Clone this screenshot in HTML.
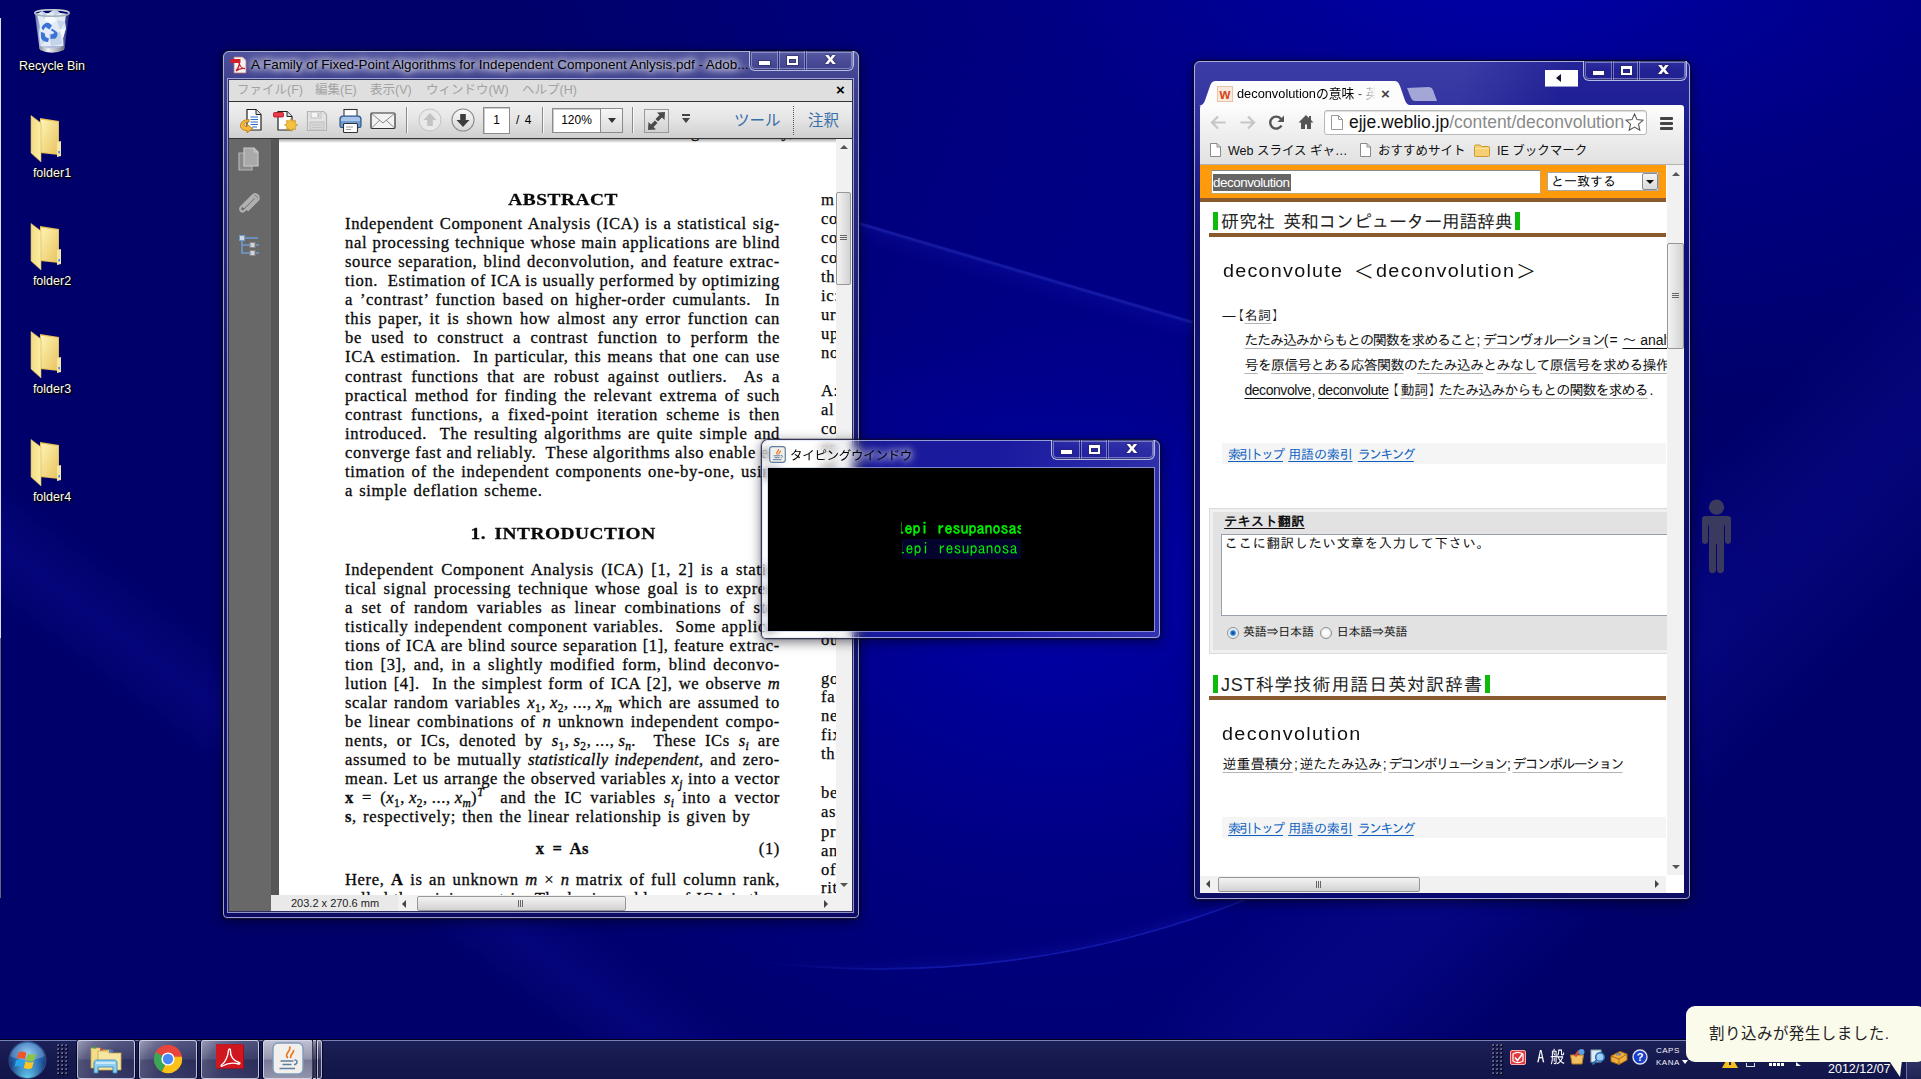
<!DOCTYPE html>
<html lang="ja">
<head>
<meta charset="utf-8">
<title>Desktop</title>
<style>
*{box-sizing:border-box;margin:0;padding:0}
html,body{width:1921px;height:1079px;overflow:hidden}
body{position:relative;background:#000070;font-family:"Liberation Sans","Noto Sans CJK JP",sans-serif;font-size:12px;color:#000}
.abs{position:absolute}
#desk{position:absolute;left:0;top:0;width:1921px;height:1079px;overflow:hidden;
background:
linear-gradient(135deg,rgba(0,0,0,0) 72%,rgba(25,25,180,.2) 76.500%,rgba(25,25,180,.22) 78.500%,rgba(0,0,0,0) 84%),
linear-gradient(37deg,rgba(0,0,0,0) 18.500%,rgba(20,20,170,.22) 20.600%,rgba(20,20,170,.25) 21.200%,rgba(0,0,0,0) 24%),
radial-gradient(ellipse 700px 560px at 1060px 590px,rgba(0,0,185,.8),rgba(0,0,160,.45) 50%,rgba(0,0,140,0) 100%),
radial-gradient(ellipse 1000px 460px at 1500px -40px,rgba(0,0,190,.75),rgba(0,0,165,.4) 50%,rgba(0,0,140,0) 100%),
#00006a}
/* desktop icons */
.dicon{position:absolute;width:104px;text-align:center;color:#fff;font-size:12.5px;text-shadow:1px 1px 2px #000,0 0 3px #000,0 1px 1px #000}
/* aero windows */
.win{position:absolute;border-radius:7px 7px 5px 5px;border:1px solid rgba(0,0,20,.75);box-shadow:0 0 0 1px rgba(0,0,30,.2),0 3px 12px rgba(0,0,20,.55)}
.win .glass{position:absolute;left:0;top:0;right:0;bottom:0;border-radius:6px 6px 4px 4px;border:1px solid rgba(200,205,245,.75)}
.wtitle{position:absolute;white-space:nowrap;font-size:13px;color:#000;text-shadow:0 0 6px #fff,0 0 9px #fff,0 0 12px rgba(255,255,255,.9)}
.cbtns{position:absolute;height:20px;border:1px solid rgba(205,210,245,.85);border-top:none;border-radius:0 0 6px 6px;display:flex;overflow:hidden;background:linear-gradient(rgba(255,255,255,.05),rgba(255,255,255,0) 50%,rgba(0,0,20,.05));box-shadow:inset 0 0 0 1px rgba(12,12,70,.6),inset 0 0 0 2px rgba(185,190,240,.5)}
.cbtns div{height:100%;border-right:1px solid rgba(12,12,70,.55);box-shadow:inset -1px 0 0 rgba(190,195,240,.5),1px 0 0 rgba(190,195,240,.5);position:relative}
.cbtns div:last-child{border-right:none}

/* PDF window */
#pdfwin{left:222px;top:50px;width:638px;height:869px;background:linear-gradient(#50529e 0,#40428f 28px,#2a2c84 110px,#181a72 320px,#0c0c64 100%)}
#pdfc{position:absolute;left:6px;top:29px;width:623px;height:831px;background:#666;overflow:hidden;box-shadow:0 0 0 1px rgba(8,8,50,.75),0 0 0 2px rgba(200,205,245,.7)}
#pmenu{position:absolute;left:0;top:0;width:623px;height:22px;background:#dfdfdf;border-bottom:1px solid #333;font-size:12.5px;color:#a2a2a2}
#pmenu span{position:absolute;top:2px;white-space:nowrap;line-height:16px}
#ptool{position:absolute;left:0;top:22px;width:623px;height:37px;background:linear-gradient(#efefef,#e6e6e6 45%,#cfcfcf);border-bottom:1px solid #333}
#ppane{position:absolute;left:0;top:59px;width:42px;height:772px;background:#686868}
#pgap{position:absolute;left:42px;top:59px;width:8px;height:756px;background:#565656}
#ppage{position:absolute;left:50px;top:59px;width:557px;height:756px;background:#fff;overflow:hidden;font-family:"Liberation Serif",serif;font-size:16.6px;color:#0a0a0a;line-height:19px;letter-spacing:.62px}
#ppage:before{content:"";position:absolute;left:0;top:0;width:100%;height:4px;background:linear-gradient(rgba(0,0,0,.35),rgba(0,0,0,0))}
.pl{position:absolute;margin-top:1px;left:66px;width:435px;height:19px;text-align:justify;text-align-last:justify;-webkit-text-stroke:.3px #0a0a0a;white-space:nowrap}
.ph{left:66px;width:435px;text-align:center;font-weight:bold;font-size:17px;letter-spacing:.45px;white-space:nowrap;height:19px;padding-left:1px;transform:scaleX(1.14);-webkit-text-stroke:.3px #0a0a0a}
.pl.l{text-align-last:left;word-spacing:1.5px}
.pr{position:absolute;margin-top:1px;left:542px;width:40px;height:19px;white-space:nowrap;-webkit-text-stroke:.25px #0a0a0a}
.pl sub,.pl sup{font-size:11.500px;line-height:0}
.pl i{-webkit-text-stroke:.35px #0a0a0a}
.pl i{letter-spacing:.3px}
#pvs{position:absolute;left:607px;top:59px;width:16px;height:756px;background:#f1f1f1}
#phs{position:absolute;left:42px;top:815px;width:581px;height:16px;background:#f1f1f1}
.thumbv{position:absolute;border:1px solid #979797;border-radius:2px;background:linear-gradient(90deg,#f3f3f3,#e3e3e3 50%,#d2d2d2)}
.thumbh{position:absolute;border:1px solid #979797;border-radius:2px;background:linear-gradient(#f3f3f3,#e3e3e3 50%,#d2d2d2)}
.tsep{position:absolute;top:5px;width:1px;height:26px;background:#8a8a8a;box-shadow:1px 0 0 #f8f8f8}
.tbox{position:absolute;background:#fff;border:1px solid #8c8c8c;box-shadow:inset 1px 1px 0 #ccc;font-size:12px;text-align:center}

.cbtns i{position:absolute;display:block;font-style:normal}
.cbtns .mn{left:9px;top:10px;width:11px;height:4px;background:#fff;box-shadow:0 0 0 1px rgba(40,40,90,.55)}
.cbtns .mx{left:8px;top:5px;width:11px;height:9px;border:2px solid #fff;border-top-width:3px;box-shadow:0 0 0 1px rgba(40,40,90,.55),inset 0 0 0 1px rgba(40,40,90,.55)}
.cbtns .cl{left:1px;right:-1px;top:-2px;text-align:center;color:#fff;font-weight:bold;font-size:16px;line-height:19px;font-family:"DejaVu Sans","Liberation Sans",sans-serif;text-shadow:0 0 1px #224,0 0 2px #224;transform:scaleX(1.1)}

/* Chrome window */
#chromewin{left:1193px;top:60px;width:498px;height:840px;background:linear-gradient(105deg,rgba(0,0,130,0) 0,rgba(0,0,130,0) 38%,rgba(0,0,130,.4) 52%,rgba(0,0,130,.4) 70%,rgba(0,0,130,0) 84%),linear-gradient(#3c3ca6 0,#3636a2 40px,#2a2a96 80px,#1a1a82 130px,#111170 220px,#0e0e66 100%)}
#ctab{position:absolute;left:5px;top:20px;width:214px;height:25px}
#cbar{position:absolute;z-index:2;left:6px;top:44px;width:484px;height:60px;background:linear-gradient(#fdfdfd,#eee 50%,#e1e1e1);border-radius:3px 3px 0 0;border-bottom:1px solid #b3b3b3}
#cweb{position:absolute;left:6px;top:103px;width:484px;height:729px;background:#fff;overflow:hidden;font-family:"Liberation Sans","IPAGothic","Noto Sans CJK JP",sans-serif}
.bm{position:absolute;top:80px;font-size:12.5px;white-space:nowrap;color:#111}
.wl{position:absolute;white-space:nowrap;font-size:14px;color:#111;text-decoration:underline;text-decoration-color:#aaa;text-underline-offset:3px;text-decoration-thickness:1px}
.wl b{font-weight:normal;text-decoration:underline;text-decoration-color:#111}
.wl s{text-decoration:none;display:inline-block}
.idx{position:absolute;left:22px;width:444px;height:21px;background:#f5f5f5;font-size:13px;color:#06c;white-space:nowrap;line-height:21px;padding-left:5px;word-spacing:1px}
.idx span{text-decoration:underline}
.gh{position:absolute;left:12px;height:18px;border-left:5px solid #0dbb0d;border-right:5px solid #0dbb0d;padding:0 2px;font-size:18px;line-height:18px;white-space:nowrap;color:#222}
.br{position:absolute;left:9px;width:457px;height:4px;background:#8a5a2e}
.pg{display:inline-block;vertical-align:-2px;margin-right:7px}

/* typing window */
#typewin{left:761px;top:439px;width:400px;height:200px;background:linear-gradient(100deg,rgba(255,255,255,.1) 0,rgba(255,255,255,.1) 55%,rgba(255,255,255,.2) 100%);backdrop-filter:blur(5px);-webkit-backdrop-filter:blur(5px);border-color:rgba(5,5,40,.8)}
#typec{position:absolute;left:6px;top:28px;width:386px;height:163px;background:#000;box-shadow:0 0 0 1px rgba(190,200,240,.6);font-family:"IPAGothic","Liberation Mono",monospace;font-size:16px;color:#00f000;white-space:pre}
/* taskbar */
#taskbar{position:absolute;left:0;top:1040px;width:1921px;height:39px;background:linear-gradient(#1c2058 0,#161a4e 40%,#12154a 100%);border-top:1px solid #7a80b8;box-shadow:0 -1px 0 #02021a}
.tb{position:absolute;top:-1px;height:39px;border:1px solid rgba(215,218,240,.8);border-radius:3px;background:linear-gradient(rgba(255,255,255,.1),rgba(255,255,255,.04) 48%,rgba(0,0,30,.12) 52%,rgba(255,255,255,.03)),linear-gradient(125deg,rgba(255,255,255,.5) 0,rgba(255,255,255,.28) 22%,rgba(255,255,255,.16) 50%,rgba(255,255,255,.1) 100%);box-shadow:0 0 0 1px rgba(0,0,20,.7)}
.grip{position:absolute;width:11px;background-image:radial-gradient(circle at 1.2px 1.2px,#6a6c8c 0,#6a6c8c .7px,transparent 1.2px),radial-gradient(circle at 2.2px 2.2px,#04041e 0,#04041e .9px,transparent 1.400px);background-size:4px 4px}
#balloon{position:absolute;left:1686px;top:1006px;width:240px;height:56px;background:#fbfbec;border-radius:9px;font-size:15px;color:#222}

.ln{position:absolute;left:0;height:18px;line-height:18px;white-space:nowrap;color:#111}
.ln span{position:absolute;top:0;white-space:nowrap}
.ln s{text-decoration:none;display:inline-block}
.f14{font-size:14px;height:16px;line-height:16px}
.f13{font-size:13px;height:16px;line-height:16px}
.f12{font-size:12px;height:16px;line-height:16px}
.h18{font-size:18px;height:20px;line-height:20px;color:#222}
.h2{font-size:18px;height:22px;line-height:22px}
.sx{transform:scaleX(1.1);transform-origin:0 50%}
.jp{font-family:"IPAGothic","Noto Sans CJK JP",sans-serif}
.ug{text-decoration:underline;text-decoration-color:#b4b4b4;text-underline-offset:3px;text-decoration-thickness:1px}
.ud{text-decoration:underline;text-decoration-color:#111;text-underline-offset:3px;text-decoration-thickness:1px}
.ub{text-decoration:underline;text-underline-offset:2px;text-decoration-thickness:1px}
.lk span{color:#0a5fc0;text-decoration:underline;text-underline-offset:2px;text-decoration-thickness:1px}
.idxbg{position:absolute;left:22px;width:444px;height:21px;background:#f5f5f5}
.gb{position:absolute;width:5px;height:18px;background:#0dbb0d}
</style>
</head>
<body>
<div id="desk">

<div class="abs" style="left:700px;top:174px;width:560px;height:22px;transform-origin:0 0;transform:rotate(16.500deg);background:linear-gradient(rgba(90,100,255,0) 0,rgba(80,100,255,.3) 2px,rgba(40,50,220,.1) 5px,rgba(20,20,180,0) 100%)"></div>
<div class="abs" style="left:-120px;top:-1030px;width:2000px;height:2000px;border-radius:50%;border:2px solid rgba(50,70,255,.35);box-shadow:inset 0 0 16px rgba(40,50,235,.25);-webkit-mask-image:linear-gradient(90deg,transparent 44%,#000 53%,#000 66%,transparent 80%);mask-image:linear-gradient(90deg,transparent 44%,#000 53%,#000 66%,transparent 80%)"></div>
<!-- DESKTOP ICONS -->
<div id="icons">
<div class="abs" style="left:0;top:18px;width:1px;height:620px;background:#dde"></div><div class="abs" style="left:0;top:638px;width:1px;height:260px;background:#667"></div>
<svg width="38" height="46" viewBox="0 0 38 46" style="position:absolute;left:33px;top:8px;overflow:visible">
<defs><linearGradient id="rb1" x1="0" y1="0" x2="1" y2="0"><stop offset="0" stop-color="#7f97bd" stop-opacity=".75"/><stop offset=".18" stop-color="#d6e2f2" stop-opacity=".9"/><stop offset=".75" stop-color="#c5d4ea" stop-opacity=".85"/><stop offset=".9" stop-color="#5f78a8" stop-opacity=".55"/><stop offset="1" stop-color="#3f5890" stop-opacity=".5"/></linearGradient>
<linearGradient id="rb2" x1="0" y1="0" x2="1" y2="0"><stop offset="0" stop-color="#8a8f98"/><stop offset=".35" stop-color="#f2f3f5"/><stop offset=".7" stop-color="#aeb3bb"/><stop offset="1" stop-color="#6d727c"/></linearGradient></defs>
<path d="M1.800 5 L36.200 5 L31.500 41 Q19 46 6.500 41 Z" fill="url(#rb1)"/>
<path d="M4 6 L9 3 L14 6 L22 1 L27 5 L33 6 L32 14 L33 20 L30 30 L30.500 38 L8 38 L6 26 L7 18 Z" fill="#e6eef8" opacity=".95"/>
<path d="M9 3 L14 6 L11 12 Z M22 1 L27 5 L20 9 Z M24 12 L32 14 L27 22 Z M16 26 L27 24 L29 36 L18 38 Z M6.500 22 L13 30 L9 37 Z" fill="#c3d3e8"/>
<path d="M14 6 L20 9 L24 12 L18 16 L11 12 Z M27 22 L33 20 L30 30 Z" fill="#f6f9fd"/>
<path d="M8.500 19.500 q3-5.500 7.500-4.500 l3 2.500 -2.500 4 -4-2.500 -2.500 3.500z M19 20.500 l5 3.500 q1.500 3.500-1.500 6.500 l-5 .5 0-4.500 3-.5 .5-2 -3-1.500z M8 24 l3.500 1 1 4 3.500 1.500 -1 3.500 q-5 0-7-4z" fill="#3a72d6"/>
<path d="M6.500 38 Q19 43 31.500 38 L31 42 Q19 47.500 7 42 Z" fill="url(#rb2)"/>
<ellipse cx="19" cy="5" rx="17.300" ry="3.300" fill="none" stroke="#a9b0ba" stroke-width="1.500"/>
<path d="M2 4.500 a17.300 3.300 0 0 1 34 0" fill="none" stroke="#e2e6ea" stroke-width=".8"/>
</svg>
<div class="dicon" style="left:0;top:59px">Recycle Bin</div>
<svg width="34" height="48" viewBox="0 0 34 48" style="position:absolute;left:30px;top:115px;overflow:visible">
<defs><linearGradient id="fg0" x1="0" y1="0" x2="1" y2="1"><stop offset="0" stop-color="#fdf3b4"/><stop offset="1" stop-color="#e9c55f"/></linearGradient>
<linearGradient id="fh0" x1="0" y1="0" x2="1" y2="0"><stop offset="0" stop-color="#f3da82"/><stop offset="1" stop-color="#fbeea6"/></linearGradient></defs>
<path d="M10 3 L29 6 L29 40 L10 38 Z" fill="#e4bd55"/>
<path d="M11 4.5 L28 7 L28 39 L11 37 Z" fill="url(#fg0)"/>
<path d="M27 27 L31 26 L31 41 L27 42 Z" fill="#f4e6a6"/>
<rect x="28.3" y="36" width="1.6" height="2.4" fill="#3f8fe0"/>
<path d="M1 0.5 L11 8 L11 47 L1 38 Z" fill="url(#fh0)" stroke="#d9b650" stroke-width=".6"/>
</svg>
<div class="dicon" style="left:0;top:166px">folder1</div>
<svg width="34" height="48" viewBox="0 0 34 48" style="position:absolute;left:30px;top:223px;overflow:visible">
<defs><linearGradient id="fg1" x1="0" y1="0" x2="1" y2="1"><stop offset="0" stop-color="#fdf3b4"/><stop offset="1" stop-color="#e9c55f"/></linearGradient>
<linearGradient id="fh1" x1="0" y1="0" x2="1" y2="0"><stop offset="0" stop-color="#f3da82"/><stop offset="1" stop-color="#fbeea6"/></linearGradient></defs>
<path d="M10 3 L29 6 L29 40 L10 38 Z" fill="#e4bd55"/>
<path d="M11 4.5 L28 7 L28 39 L11 37 Z" fill="url(#fg1)"/>
<path d="M27 27 L31 26 L31 41 L27 42 Z" fill="#f4e6a6"/>
<rect x="28.3" y="36" width="1.6" height="2.4" fill="#3f8fe0"/>
<path d="M1 0.5 L11 8 L11 47 L1 38 Z" fill="url(#fh1)" stroke="#d9b650" stroke-width=".6"/>
</svg>
<div class="dicon" style="left:0;top:274px">folder2</div>
<svg width="34" height="48" viewBox="0 0 34 48" style="position:absolute;left:30px;top:331px;overflow:visible">
<defs><linearGradient id="fg2" x1="0" y1="0" x2="1" y2="1"><stop offset="0" stop-color="#fdf3b4"/><stop offset="1" stop-color="#e9c55f"/></linearGradient>
<linearGradient id="fh2" x1="0" y1="0" x2="1" y2="0"><stop offset="0" stop-color="#f3da82"/><stop offset="1" stop-color="#fbeea6"/></linearGradient></defs>
<path d="M10 3 L29 6 L29 40 L10 38 Z" fill="#e4bd55"/>
<path d="M11 4.5 L28 7 L28 39 L11 37 Z" fill="url(#fg2)"/>
<path d="M27 27 L31 26 L31 41 L27 42 Z" fill="#f4e6a6"/>
<rect x="28.3" y="36" width="1.6" height="2.4" fill="#3f8fe0"/>
<path d="M1 0.5 L11 8 L11 47 L1 38 Z" fill="url(#fh2)" stroke="#d9b650" stroke-width=".6"/>
</svg>
<div class="dicon" style="left:0;top:382px">folder3</div>
<svg width="34" height="48" viewBox="0 0 34 48" style="position:absolute;left:30px;top:439px;overflow:visible">
<defs><linearGradient id="fg3" x1="0" y1="0" x2="1" y2="1"><stop offset="0" stop-color="#fdf3b4"/><stop offset="1" stop-color="#e9c55f"/></linearGradient>
<linearGradient id="fh3" x1="0" y1="0" x2="1" y2="0"><stop offset="0" stop-color="#f3da82"/><stop offset="1" stop-color="#fbeea6"/></linearGradient></defs>
<path d="M10 3 L29 6 L29 40 L10 38 Z" fill="#e4bd55"/>
<path d="M11 4.5 L28 7 L28 39 L11 37 Z" fill="url(#fg3)"/>
<path d="M27 27 L31 26 L31 41 L27 42 Z" fill="#f4e6a6"/>
<rect x="28.3" y="36" width="1.6" height="2.4" fill="#3f8fe0"/>
<path d="M1 0.5 L11 8 L11 47 L1 38 Z" fill="url(#fh3)" stroke="#d9b650" stroke-width=".6"/>
</svg>
<div class="dicon" style="left:0;top:490px">folder4</div>
</div>

<!-- PDF WINDOW -->
<div id="pdfwin" class="win">
<div class="glass"></div>
<svg class="abs" style="left:7px;top:5px" width="17" height="18" viewBox="0 0 17 18"><path d="M4 1h8.500l3.500 3.500v12.500h-12z" fill="#f4f4f4" stroke="#b77" stroke-width=".8"/><path d="M12.500 1v3.500h3.500" fill="#ddd"/><rect x="0.500" y="3" width="10" height="4" fill="#d2202a"/><path d="M6 15c2-2.500 3.500-6 3.200-8.500M6 15c2.500-2 6-3 9-2.500M9.200 7c.5 3 3 5.500 5.800 5.500" fill="none" stroke="#c81e28" stroke-width="1.300"/></svg>
<div class="wtitle" style="left:28px;top:6px;font-size:13.45px" id="pdftitle">A Family of Fixed-Point Algorithms for Independent Component Anlysis.pdf - Adob...</div>
<div class="cbtns" style="left:526px;top:0;width:105px"><div style="width:29px"><i class="mn"></i></div><div style="width:27px"><i class="mx"></i></div><div style="width:47px"><i class="cl">x</i></div></div>
<div id="pdfc">
 <div id="pmenu"><span style="left:8px">ファイル(F)</span><span style="left:86px">編集(E)</span><span style="left:141px">表示(V)</span><span style="left:197px">ウィンドウ(W)</span><span style="left:293px">ヘルプ(H)</span><span style="left:607px;top:2px;color:#000;font-size:15px;font-weight:bold">×</span></div>
 <div id="ptool">
<!-- export -->
<svg class="abs" style="left:10px;top:6px" width="26" height="25" viewBox="0 0 26 25"><path d="M8 1.500h9l5 5v15.500h-14z" fill="#fff" stroke="#222" stroke-width="1.200"/><path d="M17 1.500v5h5" fill="#ddd" stroke="#222" stroke-width="1"/><path d="M11.500 9h7.500M11.500 11.500h7.500M11.500 14h7.500M11.500 16.500h7.500M13 19h5" stroke="#2a6fd0" stroke-width="1.100"/><path d="M10 11.500c-5 0-8.500 2.500-8.500 6.200c0 3 2.600 4.800 6.500 4.800v2.300l5.500-4.300-5.500-4.300v2.400c-1.800 0-3-.6-3-2c0-1.600 2-2.600 5-2.600z" fill="#f6b93c" stroke="#b9780c" stroke-width=".9"/></svg>
<!-- create -->
<svg class="abs" style="left:43px;top:6px" width="27" height="26" viewBox="0 0 27 26"><path d="M6 3.500h9l5 5v13.500h-14z" fill="#fff" stroke="#222" stroke-width="1.200"/><path d="M15 3.500v5h5" fill="#ddd" stroke="#222" stroke-width="1"/><rect x="1.500" y="4.500" width="10" height="4.500" rx="1" fill="#ee3a46" stroke="#a0101c" stroke-width=".8"/><path d="M19 14l1.500 2.600 3-.6-.6 3 2.600 1.500-2.600 1.500.6 3-3-.6-1.500 2.600-1.500-2.600-3 .6.600-3-2.600-1.500 2.600-1.500-.6-3 3 .6z" fill="#f6c13c" stroke="#c58c16" stroke-width=".7" transform="translate(0,-3.500)"/></svg>
<!-- save (disabled) -->
<svg class="abs" style="left:77px;top:8px" width="22" height="22" viewBox="0 0 22 22"><path d="M1.500 1.500h16l3 3v16h-19z" fill="#e4e4e4" stroke="#b4b4b4" stroke-width="1.200"/><rect x="5" y="2" width="10" height="6" fill="#f4f4f4" stroke="#bdbdbd"/><rect x="11.500" y="3" width="2" height="4" fill="#bdbdbd"/><rect x="4" y="12" width="14" height="8" fill="#d8d8d8" stroke="#bdbdbd"/><path d="M6 15h10M6 17.500h10" stroke="#c4c4c4"/></svg>
<!-- print -->
<svg class="abs" style="left:109px;top:6px" width="25" height="26" viewBox="0 0 25 26"><rect x="6" y="1.500" width="13" height="9" fill="#fff" stroke="#333" stroke-width="1.100"/><path d="M2 11c0-2 1-3 3-3h15c2 0 3 1 3 3v7c0 1-.5 1.500-1.500 1.500h-18c-1 0-1.500-.5-1.500-1.500z" fill="#6f9bd0" stroke="#2c4f80" stroke-width="1.100"/><path d="M3 11.500c0-1.500 1-2.500 2.500-2.500h14c1.500 0 2.500 1 2.500 2.500v1.500h-19z" fill="#a9c6ea"/><rect x="5.500" y="15.500" width="14" height="9" rx="1" fill="#fff" stroke="#333" stroke-width="1.100"/><path d="M8 19h7M8 21.500h5" stroke="#999"/></svg>
<!-- mail -->
<svg class="abs" style="left:141px;top:10px" width="26" height="18" viewBox="0 0 26 18"><rect x="1" y="1" width="24" height="15.500" rx="1" fill="#f2f2f2" stroke="#333" stroke-width="1.200"/><path d="M1.500 1.500l11.500 9.500 11.500-9.500M1.500 16l8.500-8M24.500 16l-8.500-8" fill="none" stroke="#8a8a8a" stroke-width="1"/></svg>
<div class="tsep" style="left:177px"></div>
<!-- up (disabled) -->
<svg class="abs" style="left:189px;top:6px" width="24" height="24" viewBox="0 0 24 24"><circle cx="12" cy="12" r="11" fill="#e9e9e9" stroke="#c2c2c2" stroke-width="1"/><path d="M12 5l6.500 7h-3.700v6h-5.600v-6h-3.700z" fill="#c3c3c3"/></svg>
<!-- down -->
<svg class="abs" style="left:222px;top:6px" width="24" height="24" viewBox="0 0 24 24"><defs><linearGradient id="dg" x1="0" y1="0" x2="0" y2="1"><stop offset="0" stop-color="#fafafa"/><stop offset="1" stop-color="#d6d6d6"/></linearGradient></defs><circle cx="12" cy="12" r="11" fill="url(#dg)" stroke="#8d8d8d" stroke-width="1.100"/><path d="M12 19l6.500-7h-3.700v-6h-5.600v6h-3.700z" fill="#3c3c3c"/></svg>
<div class="tbox" style="left:254px;top:5px;width:27px;height:27px;line-height:25px">1</div>
<div class="abs" style="left:287px;top:11px;font-size:12px;white-space:nowrap;word-spacing:2px">/ 4</div>
<div class="tsep" style="left:313px"></div>
<div class="tbox" style="left:323px;top:6px;width:48px;height:25px;line-height:23px;border-right:none">120%</div>
<div class="abs" style="left:371px;top:6px;width:23px;height:25px;border:1px solid #8c8c8c;background:linear-gradient(#f6f6f6,#dcdcdc)"><div class="abs" style="left:7px;top:9px;border:4px solid transparent;border-top:5px solid #333"></div></div>
<div class="tsep" style="left:403px"></div>
<div class="abs" style="left:415px;top:7px;width:25px;height:24px;border:1px solid #9a9a9a;background:linear-gradient(#ededed,#d2d2d2)"><svg width="23" height="22" viewBox="0 0 23 22"><path d="M20 2l-8 .5 2.500 2.500-4 4 2.500 2.500 4-4 2.500 2.500zM3 20l8-.5-2.500-2.500 4-4-2.500-2.500-4 4-2.500-2.500z" fill="#4a4a4a"/></svg></div>
<div class="abs" style="left:453px;top:12px;width:8px;height:2px;background:#444"></div>
<div class="abs" style="left:453px;top:16px;border:4px solid transparent;border-top:5px solid #444"></div>
<div class="abs" style="left:505px;top:6px;font-size:15.500px;color:#3a6ea8;white-space:nowrap">ツール</div>
<div class="abs" style="left:564px;top:4px;width:0;height:29px;border-left:1px dotted #555"></div>
<div class="abs" style="left:579px;top:6px;font-size:15.500px;color:#3a6ea8;white-space:nowrap">注釈</div>
</div>
 <div id="ppane">
<svg class="abs" style="left:9px;top:8px" width="23" height="25" viewBox="0 0 23 25"><path d="M1 6h13v17h-13z" fill="#8a8a8a" stroke="#b5b5b5" stroke-width="1.200"/><path d="M6 1h10l4 4v14h-14z" fill="#a9a9a9" stroke="#c9c9c9" stroke-width="1.200"/><path d="M16 1v4h4" fill="none" stroke="#c9c9c9"/></svg>
<svg class="abs" style="left:9px;top:51px" width="23" height="24" viewBox="0 0 23 24"><path d="M6 17l9.500-9.500c1.500-1.500 3.500.5 2 2l-11 11c-2.500 2.500-6-1-3.500-3.500l11.500-11.500c3.500-3.500 8.500 1.500 5 5l-9.500 9.500" fill="none" stroke="#b0b0b0" stroke-width="2.200" stroke-linecap="round"/></svg>
<svg class="abs" style="left:10px;top:96px" width="21" height="21" viewBox="0 0 21 21"><path d="M3 3v15h8M3 10h8M3 3h16" fill="none" stroke="#6f9bd0" stroke-width="1.600"/><rect x="0.500" y="0.500" width="5" height="5" fill="#cfd6e0" stroke="#6f9bd0"/><rect x="11" y="7.500" width="5" height="5" fill="#cfd6e0" stroke="#8a8a8a"/><rect x="11" y="15.500" width="5" height="5" fill="#cfd6e0" stroke="#8a8a8a"/><path d="M17 10h3M17 18h3" stroke="#6f9bd0" stroke-width="1.600"/></svg>
</div>
 <div id="pgap"></div>
 <div id="ppage"><div class="abs ph" style="top:51px">ABSTRACT</div>
<div class="pl" style="top:74px">Independent Component Analysis (ICA) is a statistical sig-</div>
<div class="pl" style="top:93px">nal processing technique whose main applications are blind</div>
<div class="pl" style="top:112px">source separation, blind deconvolution, and feature extrac-</div>
<div class="pl" style="top:131px">tion.&nbsp; Estimation of ICA is usually performed by optimizing</div>
<div class="pl" style="top:150px">a ’contrast’ function based on higher-order cumulants.&nbsp; In</div>
<div class="pl" style="top:169px">this paper, it is shown how almost any error function can</div>
<div class="pl" style="top:188px">be used to construct a contrast function to perform the</div>
<div class="pl" style="top:207px">ICA estimation.&nbsp; In particular, this means that one can use</div>
<div class="pl" style="top:227px">contrast functions that are robust against outliers.&nbsp; As a</div>
<div class="pl" style="top:246px">practical method for finding the relevant extrema of such</div>
<div class="pl" style="top:265px">contrast functions, a fixed-point iteration scheme is then</div>
<div class="pl" style="top:284px">introduced.&nbsp; The resulting algorithms are quite simple and</div>
<div class="pl" style="top:303px">converge fast and reliably.&nbsp; These algorithms also enable es-</div>
<div class="pl" style="top:322px">timation of the independent components one-by-one, using</div>
<div class="pl l" style="top:341px">a simple deflation scheme.</div>
<div class="abs ph" style="top:385px;word-spacing:-1px">1.&nbsp; INTRODUCTION</div>
<div class="pl" style="top:420px">Independent Component Analysis (ICA) [1, 2] is a statis-</div>
<div class="pl" style="top:439px">tical signal processing technique whose goal is to express</div>
<div class="pl" style="top:458px">a set of random variables as linear combinations of sta-</div>
<div class="pl" style="top:477px">tistically independent component variables.&nbsp; Some applica-</div>
<div class="pl" style="top:496px">tions of ICA are blind source separation [1], feature extrac-</div>
<div class="pl" style="top:515px">tion [3], and, in a slightly modified form, blind deconvo-</div>
<div class="pl" style="top:534px">lution [4].&nbsp; In the simplest form of ICA [2], we observe <i>m</i></div>
<div class="pl" style="top:553px">scalar random variables <i>x</i><sub>1</sub>,&thinsp;<i>x</i><sub>2</sub>,&thinsp;...,&thinsp;<i>x</i><sub><i>m</i></sub> which are assumed to</div>
<div class="pl" style="top:572px">be linear combinations of <i>n</i> unknown independent compo-</div>
<div class="pl" style="top:591px">nents, or ICs, denoted by <i>s</i><sub>1</sub>,&thinsp;<i>s</i><sub>2</sub>,&thinsp;...,&thinsp;<i>s</i><sub><i>n</i></sub>.&nbsp; These ICs <i>s</i><sub><i>i</i></sub> are</div>
<div class="pl" style="top:610px">assumed to be mutually <i>statistically independent</i>, and zero-</div>
<div class="pl" style="top:629px">mean.&nbsp;Let us arrange the observed variables <i>x</i><sub><i>j</i></sub> into a vector</div>
<div class="pl" style="top:648px"><b>x</b> = (<i>x</i><sub>1</sub>,&thinsp;<i>x</i><sub>2</sub>,&thinsp;...,&thinsp;<i>x</i><sub><i>m</i></sub>)<sup><i>T</i></sup>&nbsp; and the IC variables <i>s</i><sub><i>i</i></sub> into a vector</div>
<div class="pl l" style="top:667px"><b>s</b>, respectively; then the linear relationship is given by</div>
<div class="pl l" style="top:699px;text-align:center;text-align-last:center;word-spacing:3px"><b>x = As</b></div>
<div class="pl l" style="top:699px;text-align:right;text-align-last:right">(1)</div>
<div class="pl" style="top:730px">Here, <b>A</b> is an unknown <i>m</i> × <i>n</i> matrix of full column rank,</div>
<div class="pl" style="top:749px">called the mixing matrix. The basic problem of ICA is then</div>
<div class="pl l" style="top:-18px;left:412px;width:120px">g&nbsp;&nbsp;&nbsp;&nbsp;&nbsp;&nbsp;&nbsp;&nbsp;&nbsp;&nbsp;&nbsp;&nbsp;&nbsp;y,</div>
<div class="pr" style="top:50px">m</div>
<div class="pr" style="top:69px">co</div>
<div class="pr" style="top:88px">co</div>
<div class="pr" style="top:108px">co</div>
<div class="pr" style="top:127px">th</div>
<div class="pr" style="top:146px">ic:</div>
<div class="pr" style="top:165px">ur</div>
<div class="pr" style="top:184px">up</div>
<div class="pr" style="top:203px">no</div>
<div class="pr" style="top:241px">A:</div>
<div class="pr" style="top:260px">al</div>
<div class="pr" style="top:279px">co</div>
<div class="pr" style="top:298px">es</div>
<div class="pr" style="top:317px">of</div>
<div class="pr" style="top:490px">ou</div>
<div class="pr" style="top:529px">go</div>
<div class="pr" style="top:547px">fa</div>
<div class="pr" style="top:566px">ne</div>
<div class="pr" style="top:585px">fix</div>
<div class="pr" style="top:604px">th</div>
<div class="pr" style="top:643px">be</div>
<div class="pr" style="top:662px">as</div>
<div class="pr" style="top:682px">pr</div>
<div class="pr" style="top:701px">an</div>
<div class="pr" style="top:720px">of</div>
<div class="pr" style="top:738px">rit</div></div>
 <div id="pvs">
  <div class="abs" style="left:4px;top:6px;border:4px solid transparent;border-bottom:4px solid #555;border-top:none"></div>
  <div class="thumbv" style="left:0;top:53px;width:15px;height:93px"><div class="abs" style="left:3px;top:42px;width:7px;height:1px;background:#666;box-shadow:0 2px 0 #666,0 4px 0 #666"></div></div>
  <div class="abs" style="left:4px;top:744px;border:4px solid transparent;border-top:4px solid #555;border-bottom:none"></div>
 </div>
 <div id="phs">
  <div class="abs" style="left:0;top:0;width:127px;height:17px;background:#e9e9e9;font-size:11px;line-height:17px;color:#222;padding-left:20px;white-space:nowrap">203.2 x 270.6 mm</div>
  <div class="abs" style="left:131px;top:5px;border:4px solid transparent;border-right:4px solid #444;border-left:none"></div>
  <div class="thumbh" style="left:146px;top:1px;width:209px;height:15px"><div class="abs" style="left:100px;top:3px;width:1px;height:7px;background:#666;box-shadow:2px 0 0 #666,4px 0 0 #666"></div></div>
  <div class="abs" style="left:553px;top:5px;border:4px solid transparent;border-left:4px solid #444;border-right:none"></div>
 </div>
</div>
</div>

<!-- CHROME WINDOW -->
<div id="chromewin" class="win">
<div class="glass" style="border-color:rgba(195,200,245,.8)"></div>
<div class="abs" style="left:351px;top:9px;width:33px;height:16px;background:#fff;box-shadow:0 1px 0 #99c"><div class="abs" style="left:11px;top:4px;border:4px solid transparent;border-right:5px solid #113;border-left:none"></div></div>
<div class="cbtns" style="left:389px;top:0;width:104px"><div style="width:29px"><i class="mn"></i></div><div style="width:26px"><i class="mx"></i></div><div style="width:47px"><i class="cl">x</i></div></div>
<svg id="ctab" viewBox="0 0 214 25"><path d="M0 25 C4 24 5 22 6.500 18 L11 5 C12.500 1 14 0 17 0 L195 0 C198 0 199.500 1 201 5 L205.500 18 C207 22 208 24 214 25 Z" fill="#fcfcfc"/></svg>
<svg class="abs" style="left:212px;top:26px" width="32" height="15" viewBox="0 0 32 15"><path d="M1 1 L22 0 C25 0 26 1 27 3 L31 14 L9 14 C7 14 6 13 5 11 Z" fill="#a3a6d6"/></svg>
<div class="abs" style="left:23px;top:25px;width:16px;height:16px;background:#fbe9dc;border:1px solid #e8c4a8;color:#d2491c;font-weight:bold;font-size:14px;line-height:14px;text-align:center">w</div>
<div class="abs" style="left:43px;top:24px;width:139px;height:18px;overflow:hidden;font-size:12.800px;white-space:nowrap;line-height:18px;-webkit-mask-image:linear-gradient(90deg,#000 84%,transparent 100%);mask-image:linear-gradient(90deg,#000 84%,transparent 100%)">deconvolutionの意味 - 英和</div>
<div class="abs" style="left:187px;top:24px;font-size:15px;font-weight:bold;color:#444;line-height:18px">×</div>
<div id="cbar">
 <svg class="abs" style="left:10px;top:10px" width="17" height="15" viewBox="0 0 17 15"><path d="M8 1.500L2 7.500l6 6M2.500 7.500h13" fill="none" stroke="#c6c6c6" stroke-width="2.200"/></svg>
 <svg class="abs" style="left:39px;top:10px" width="17" height="15" viewBox="0 0 17 15"><path d="M9 1.500l6 6-6 6M14.500 7.500h-13" fill="none" stroke="#c6c6c6" stroke-width="2.200"/></svg>
 <svg class="abs" style="left:68px;top:9px" width="17" height="17" viewBox="0 0 17 17"><path d="M13.500 11.500a6 6 0 1 1 -.5-6.500" fill="none" stroke="#555" stroke-width="2.400"/><path d="M16 1.500v6.500h-6.500z" fill="#555"/></svg>
 <svg class="abs" style="left:98px;top:9px" width="16" height="16" viewBox="0 0 16 16"><path d="M8 1L0.500 8.500h2.500v6.500h4v-4.500h2v4.500h4v-6.500h2.500L13 6v-4h-2v2z" fill="#555"/></svg>
 <div class="abs" style="left:124px;top:5px;width:323px;height:25px;background:#fff;border:1px solid #b9b9b9;border-radius:3px;box-shadow:inset 0 1px 1px #ddd"></div>
 <svg class="abs" style="left:131px;top:10px" width="12" height="15" viewBox="0 0 12 15"><path d="M.5.5h7l4 4v10h-11z" fill="#fff" stroke="#999"/><path d="M7.500.5v4h4" fill="none" stroke="#999"/></svg>
 <div class="abs" id="curl" style="left:149px;top:6px;font-size:17.5px;line-height:23px;white-space:nowrap;color:#111">ejje.weblio.jp<span style="color:#8a8a8a">/content/deconvolution</span></div>
 <svg class="abs" style="left:425px;top:8px" width="19" height="18" viewBox="0 0 19 18"><path d="M9.500 1l2.500 5.600 6 .6-4.500 4 1.300 6-5.300-3.100-5.300 3.100 1.300-6-4.500-4 6-.6z" fill="#fff" stroke="#555" stroke-width="1.100"/></svg>
 <div class="abs" style="left:460px;top:12px;width:13px;height:3px;background:#444;border-radius:1px;box-shadow:0 5px 0 #444,0 10px 0 #444"></div>
 <div class="bm" style="left:10px;top:35px"><svg class="pg" width="11" height="14" viewBox="0 0 11 14"><path d="M.5.5h6.500l3.500 3.500v9.500h-10z" fill="#fff" stroke="#8a8a8a"/><path d="M7 .5v3.500h3.500" fill="none" stroke="#8a8a8a"/></svg>Web スライス ギャ…</div>
 <div class="bm" style="left:160px;top:35px"><svg class="pg" width="11" height="14" viewBox="0 0 11 14"><path d="M.5.5h6.500l3.500 3.500v9.500h-10z" fill="#fff" stroke="#8a8a8a"/><path d="M7 .5v3.500h3.500" fill="none" stroke="#8a8a8a"/></svg>おすすめサイト</div>
 <div class="bm" style="left:274px;top:35px"><svg class="pg" width="16" height="13" viewBox="0 0 16 13"><path d="M.5 2.500c0-1 .5-1.500 1.500-1.500h4l1.500 1.500h7c.7 0 1 .3 1 1v8c0 .7-.3 1-1 1h-13c-.7 0-1-.3-1-1z" fill="#f6cf72" stroke="#c99a2e"/><path d="M1 4.500h14" stroke="#fbe6a8"/></svg>IE ブックマーク</div>
</div>
<div id="cweb">
 <div class="abs" style="left:0;top:0;width:466px;height:34px;background:#ff9b0a"></div>
 <div class="abs" style="left:0;top:34px;width:466px;height:4px;background:#8a5a2e"></div>
 <div class="abs" style="left:11px;top:6px;width:330px;height:24px;background:#fff;border:1px solid #c9a36a;border-top-color:#8a8a8a;font-size:14px;line-height:20px"><span style="position:absolute;left:1px;top:3px;height:17px;line-height:17px;background:#666;color:#fff;font-size:13.400px;padding-right:1px"><span class="fit" style="--w:76.5px;letter-spacing:-0.47px">deconvolution</span></span></div>
 <div class="abs" style="left:347px;top:8px;width:112px;height:19px;background:#fff;border:1px solid #a9a9a9;font-size:13px;line-height:17px;padding-left:3px">と一致する<div class="abs" style="right:0;top:0;width:16px;height:17px;background:linear-gradient(#f4f4f4,#d9d9d9);border:1px solid #8a8a8a;border-radius:2px"><div class="abs" style="left:3px;top:6px;border:4px solid transparent;border-top:4px solid #111;border-bottom:none"></div></div></div>
 <div class="gb" style="left:13px;top:48px"></div><div class="gb" style="left:315px;top:48px"></div>
 <div class="ln h18" style="top:48px"><span class="fit" style="--w:54.3px;letter-spacing:0.10px;left:20.9px">研究社</span><span class="fit" style="--w:229.2px;letter-spacing:-0.37px;left:83.2px">英和コンピューター用語辞典</span></div>
 <div class="br" style="top:69px"></div>
 <div class="ln h2" style="top:96px"><span class="fit sx" style="--w:109.4px;letter-spacing:1.12px;left:22.7px">deconvolute</span><span class="jp" style="left:154.7px">＜</span><span class="fit sx" style="--w:126.5px;letter-spacing:1.19px;left:175.8px">deconvolution</span><span class="jp" style="left:317.1px">＞</span></div>
 <div class="ln f13" style="top:144px"><span class="" style="left:22.5px">―</span><span class="" style="left:31.0px">【</span><span class="fit ug" style="--w:27.0px;letter-spacing:0.50px;left:44.5px">名詞</span><span class="" style="left:72.0px">】</span></div>
 <div class="ln f14" style="top:167.500px"><span class="fit ug" style="--w:231.2px;letter-spacing:-1.16px;left:44.4px">たたみ込みからもとの関数を求めること</span><span class="" style="left:276.5px">;</span><span class="fit ug" style="--w:120.6px;letter-spacing:-1.94px;left:283.1px">デコンヴォルーション</span><span class="fit" style="--w:15.0px;letter-spacing:1.08px;left:403.8px">(=</span><span class="fit ud" style="--w:68.0px;letter-spacing:-0.05px;left:422.5px">〜 analysis</span></div>
 <div class="ln f14" style="top:192.500px"><span class="fit ug" style="--w:424.6px;letter-spacing:-0.73px;left:44.4px">号<s>を</s>原信号<s>&#8203;</s>とある応答関数<s>の</s>たたみ込み<s>と</s>みなし<s>て</s>原信号<s>&#8203;</s>を求める操作</span></div>
 <div class="ln f14" style="top:217.500px"><span class="fit ud" style="--w:66.4px;letter-spacing:-0.44px;left:44.4px">deconvolve</span><span class="" style="left:111.5px">,</span><span class="fit ud" style="--w:70.6px;letter-spacing:-0.45px;left:118.0px">deconvolute</span><span class="" style="left:185.0px">【</span><span class="fit ug" style="--w:27.5px;letter-spacing:-0.25px;left:200.4px">動詞</span><span class="" style="left:228.5px">】</span><span class="fit ug" style="--w:208.4px;letter-spacing:-0.97px;left:239.1px">たたみ込みからもとの関数を求める</span><span class="" style="left:449.5px">.</span></div>
 <div class="idxbg" style="top:279px"></div><div class="ln f13 lk" style="top:282.5px"><span class="fit" style="--w:55.0px;letter-spacing:-2.00px;left:28.0px">索引トップ</span><span class="fit" style="--w:64.3px;letter-spacing:-0.14px;left:88.2px">用語の索引</span><span class="fit" style="--w:56.0px;letter-spacing:-1.80px;left:157.8px">ランキング</span></div>
 <div class="abs" style="left:10px;top:345px;width:470px;height:144px;background:#e2e2e2;border:3px solid #f0f0f0;outline:1px solid #dadada"></div>
 <div class="ln f13" style="top:350px;font-weight:bold"><span class="fit ub" style="--w:80.4px;letter-spacing:0.40px;left:24.2px">テキスト翻訳</span></div>
 <div class="abs" style="left:21px;top:370px;width:470px;height:82px;background:#fff;border:1px solid #9aa0ad"></div>
 <div class="ln" style="top:370px;font-family:'IPAGothic',monospace;font-size:13.500px;letter-spacing:.5px"><span class="" style="left:24.4px">ここに翻訳したい文章を入力して下さい。</span></div>
 <div class="abs" style="left:27px;top:463px;width:12px;height:12px;border-radius:50%;border:1px solid #8e8f8f;background:radial-gradient(circle,#0a3f8c 0,#2a7fd0 2.200px,#dfe9f5 3.300px,#fff 100%)"></div>
 <div class="abs" style="left:120px;top:463px;width:12px;height:12px;border-radius:50%;border:1px solid #8e8f8f;background:radial-gradient(circle,#fdfdfd 30%,#d8d8d8 100%)"></div>
 <div class="ln f12" style="top:460px"><span class="fit" style="--w:70.7px;letter-spacing:-0.22px;left:43.0px">英語⇒日本語</span><span class="fit" style="--w:70.7px;letter-spacing:-0.22px;left:136.7px">日本語⇒英語</span></div>
 <div class="gb" style="left:13px;top:511px"></div><div class="gb" style="left:285px;top:511px"></div>
 <div class="ln h18" style="top:511px"><span class="fit" style="--w:262.0px;letter-spacing:0.93px;left:20.9px">JST科学技術用語日英対訳辞書</span></div>
 <div class="br" style="top:532px"></div>
 <div class="ln h2" style="top:559px"><span class="fit sx" style="--w:126.9px;letter-spacing:1.22px;left:22.4px">deconvolution</span></div>
 <div class="ln f14" style="top:591.500px"><span class="fit ug" style="--w:70.6px;letter-spacing:0.12px;left:22.4px">逆重畳積分</span><span class="" style="left:94.0px">;</span><span class="fit ug" style="--w:82.1px;letter-spacing:-0.32px;left:99.6px">逆たたみ込み</span><span class="" style="left:182.7px">;</span><span class="fit ug" style="--w:117.3px;letter-spacing:-2.27px;left:188.6px">デコンボリューション</span><span class="" style="left:306.9px">;</span><span class="fit ug" style="--w:110.2px;letter-spacing:-1.76px;left:312.5px">デコンボルーション</span></div>
 <div class="idxbg" style="top:653px"></div><div class="ln f13 lk" style="top:656.5px"><span class="fit" style="--w:55.0px;letter-spacing:-2.00px;left:28.0px">索引トップ</span><span class="fit" style="--w:64.3px;letter-spacing:-0.14px;left:88.2px">用語の索引</span><span class="fit" style="--w:56.0px;letter-spacing:-1.80px;left:157.8px">ランキング</span></div>
 <!-- v scrollbar -->
 <div class="abs" style="left:467px;top:0;width:17px;height:711px;background:#f1f1f1">
  <div class="abs" style="left:5px;top:8px;border:4px solid transparent;border-bottom:4px solid #555;border-top:none"></div>
  <div class="thumbv" style="left:0;top:79px;width:17px;height:106px"><div class="abs" style="left:4px;top:49px;width:7px;height:1px;background:#666;box-shadow:0 2px 0 #666,0 4px 0 #666"></div></div>
  <div class="abs" style="left:5px;top:701px;border:4px solid transparent;border-top:4px solid #555;border-bottom:none"></div>
 </div>
 <!-- h scrollbar -->
 <div class="abs" style="left:0;top:712px;width:466px;height:17px;background:#f1f1f1">
  <div class="abs" style="left:6px;top:4px;border:4px solid transparent;border-right:4px solid #444;border-left:none"></div>
  <div class="thumbh" style="left:18px;top:1px;width:202px;height:15px"><div class="abs" style="left:97px;top:3px;width:1px;height:7px;background:#666;box-shadow:2px 0 0 #666,4px 0 0 #666"></div></div>
  <div class="abs" style="left:455px;top:4px;border:4px solid transparent;border-left:4px solid #444;border-right:none"></div>
 </div>
</div>
</div>

<!-- TYPING WINDOW -->
<div id="typewin" class="win">
<div class="glass" style="border-color:rgba(215,225,250,.65)"></div>
<svg class="abs" style="left:7px;top:6px" width="17" height="17" viewBox="0 0 17 17"><rect x=".7" y=".7" width="15.600" height="15.600" rx="2.500" fill="#f1efec" stroke="#5d7f9f" stroke-width="1.200"/><path d="M8.500 8.500c-2.500-2 2-3.500 1-5.500M10 8.500c-1-1.500 2-2.500 1.500-4" fill="none" stroke="#e8761c" stroke-width="1.200"/><path d="M4.500 9.800h7M5.500 11.700h5M3.800 13.700h8.700" stroke="#5d7f9f" stroke-width="1"/><path d="M12 9.300c2-.2 2 2.200-.3 2.500" fill="none" stroke="#5d7f9f" stroke-width="1"/></svg>
<div class="wtitle" style="left:28px;top:5px;font-size:12.5px;letter-spacing:-.3px">タイピングウインドウ</div>
<div class="cbtns" style="left:289px;top:0;width:104px"><div style="width:29px"><i class="mn"></i></div><div style="width:27px"><i class="mx"></i></div><div style="width:46px"><i class="cl">x</i></div></div>
<div id="typec">
<div class="abs" style="left:133px;top:51px;width:120px;height:19px;overflow:hidden;line-height:19px;-webkit-text-stroke:.55px #00f000"><span style="margin-left:-4.500px">lepi resupanosas</span></div>
<div class="abs" style="left:134px;top:71px;width:119px;height:20px;overflow:hidden;line-height:18px;background:#03032e"><span style="margin-left:-4.500px">lepi resupanosa</span></div>
</div>
</div>


<!-- PERSON -->
<svg id="person" class="abs" style="left:1701px;top:499px" width="32" height="76" viewBox="0 0 32 76"><g fill="#3a3a5e"><circle cx="15.500" cy="8.200" r="7.600"/><path d="M4 17h23c2 0 3 1 3 3v22c0 4-6 4-6 0v-15.500h-1v44c0 5-7 5-7 0v-25.500h-1v25.500c0 5-7 5-7 0v-44h-1v15.500c0 4-6 4-6 0v-22c0-2 1-3 3-3z"/></g></svg>

<!-- TASKBAR -->
<div id="taskbar">
<!-- start orb -->
<svg class="abs" style="left:8px;top:-1px" width="40" height="40" viewBox="0 0 40 40"><defs><radialGradient id="orb" cx=".5" cy=".35" r=".7"><stop offset="0" stop-color="#7fc4f0"/><stop offset=".45" stop-color="#2a6fb8"/><stop offset=".8" stop-color="#123a80"/><stop offset="1" stop-color="#0a1f55"/></radialGradient><radialGradient id="orb2" cx=".5" cy="1" r=".6"><stop offset="0" stop-color="#6fe0ff" stop-opacity=".9"/><stop offset="1" stop-color="#6fe0ff" stop-opacity="0"/></radialGradient></defs><circle cx="19.500" cy="20" r="18.500" fill="url(#orb)" stroke="#3a4a80" stroke-width="1"/><circle cx="19.500" cy="20" r="18" fill="url(#orb2)"/><path d="M2.500 16a17.500 17.500 0 0 1 34 0c-8 5-26 5-34 0z" fill="#fff" opacity=".22"/>
<path d="M10.500 12.500c3-1.500 5.500-1 8 .5l-1.800 6.500c-2.500-1.500-5-2-8-.5z" fill="#f0562a"/><path d="M19.800 13.500c2.500 1.300 5 1.800 8.200.3l-1.800 6.500c-3 1.500-5.700 1-8.200-.3z" fill="#8cc63e"/><path d="M8.300 20.200c3-1.500 5.500-1 8 .5l-1.800 6.500c-2.500-1.500-5-2-8-.5z" fill="#2aa4e8"/><path d="M17.600 21.200c2.500 1.300 5 1.800 8.200.3l-1.800 6.500c-3 1.500-5.700 1-8.200-.3z" fill="#fcc624"/></svg>
<div class="grip" style="left:57px;top:3px;height:32px"></div>
<div class="tb" style="left:77px;width:58px"></div>
<div class="tb" style="left:139px;width:58px"></div>
<div class="tb" style="left:201px;width:58px"></div>
<div class="tb" style="left:263px;width:50px;background:linear-gradient(rgba(255,255,255,.72),rgba(255,255,255,.55) 48%,rgba(255,255,255,.42) 52%,rgba(255,255,255,.55))"></div>
<div class="tb" style="left:313px;width:5px;border-left:none;border-radius:0 3px 3px 0"></div>
<div class="tb" style="left:317px;width:5px;border-left:none;border-radius:0 3px 3px 0"></div>
<!-- explorer icon -->
<svg class="abs" style="left:89px;top:3px" width="34" height="30" viewBox="0 0 34 30"><path d="M2 4h9l2 2h9v18h-20z" fill="#f3dc8c" stroke="#c9a646" stroke-width=".8"/><path d="M9 7h9l2 2h12v17h-23z" fill="#f7e6a2" stroke="#c9a646" stroke-width=".8"/><rect x="4" y="2.500" width="3" height="2" fill="#4a9a4a"/><rect x="11" y="4.500" width="3" height="2" fill="#c84a4a"/><rect x="20" y="6" width="4" height="2.500" fill="#4a7ac8"/><path d="M5 19c0-2 1-3 3-3h17c2 0 3 1 3 3v10h-4v-6h-15v6h-4z" fill="#8fd0f0" stroke="#3a8ac0" stroke-width=".9"/><path d="M7 19h19" stroke="#dff4ff" stroke-width="1.500"/></svg>
<!-- chrome icon -->
<svg class="abs" style="left:153px;top:3px" width="30" height="30" viewBox="0 0 30 30"><circle cx="15" cy="15" r="14" fill="#e8453c"/><path d="M15 15L2.900 8A14 14 0 0 0 9 27.700z" fill="#3aa757"/><path d="M15 15L9 27.700A14 14 0 0 0 28.800 12.500L15 12.500z" fill="#fbc116"/><path d="M15 15L2.900 8A14 14 0 0 1 28.800 12.500L15 12.500z" fill="#e8453c"/><circle cx="15" cy="15" r="6.600" fill="#fff"/><circle cx="15" cy="15" r="5.200" fill="#4a8af4"/></svg>
<!-- acrobat icon -->
<svg class="abs" style="left:214px;top:2px" width="32" height="30" viewBox="0 0 32 30"><path d="M2 1.500h27v24h-27z" fill="#c8131d"/><path d="M2 1.500h27l1 1v25l-1-2h-27z" fill="#a00d16"/><path d="M2 1.500h27v23.500h-27z" fill="#d0161f"/><path d="M8 21.500c3-2 6-8 6.500-14c.2-2 2.200-2 2 .5c-.5 5 3 10 8.500 11.500c1.500.5 1 2-.5 1.500c-5-1.500-11-1-16 2c-1.500 1-2-.5-.5-1.500z" fill="none" stroke="#fff" stroke-width="1.400"/></svg>
<!-- java icon -->
<svg class="abs" style="left:272px;top:1px" width="32" height="33" viewBox="0 0 32 33"><rect x="1" y="1" width="30" height="31" rx="5" fill="#f2f0ec" stroke="#7f9ab8" stroke-width="1.400"/><path d="M16 16c-5-4 4-7 1.500-11.500M19 16c-2-3 3.500-5 2.500-8" fill="none" stroke="#e8761c" stroke-width="1.700"/><path d="M8.500 19h13M10.500 22.500h9M7.500 26.500h15.500" stroke="#5d7f9f" stroke-width="1.600"/><path d="M22.500 18c3.500-.3 3.500 4-.5 4.700" fill="none" stroke="#5d7f9f" stroke-width="1.500"/></svg>
<!-- tray -->
<div class="grip" style="left:1492px;top:3px;height:32px"></div>
<div class="abs" style="left:1510px;top:9px;width:16px;height:15px;background:#e0363c;border:1px solid #f6b0b0;border-radius:2px"><svg width="14" height="13" viewBox="0 0 14 13"><path d="M2 3c3-2 7-2 10 0v7c-3 2-7 2-10 0z" fill="none" stroke="#fff" stroke-width="1.200"/><path d="M4 6.500l2.500 3 5-6.500" fill="none" stroke="#fff" stroke-width="1.600"/></svg></div>
<div class="abs" style="left:1537px;top:5px;font-size:15px;line-height:22px;color:#fff;white-space:nowrap;font-family:'IPAGothic','Noto Sans CJK JP',monospace;letter-spacing:-1px;transform:scaleY(1.15)">A 般</div>
<svg class="abs" style="left:1569px;top:7px" width="17" height="18" viewBox="0 0 17 18"><path d="M1.500 7h13l-1.500 9h-10z" fill="#f0c060" stroke="#b07a20"/><path d="M5 8l4-6 2 1.500-3.500 5.500z" fill="#d84a3a"/><circle cx="12.500" cy="4" r="3" fill="#5aa0e0"/></svg>
<svg class="abs" style="left:1590px;top:8px" width="17" height="17" viewBox="0 0 17 17"><rect x="1" y="1" width="10" height="12" fill="#dfe8f4" stroke="#8aa"/><circle cx="10" cy="8" r="4.300" fill="#9fd0f4" stroke="#2a6fb8" stroke-width="1.600"/><path d="M6.500 11.500l-4 4" stroke="#2a6fb8" stroke-width="2.200"/></svg>
<svg class="abs" style="left:1610px;top:9px" width="18" height="15" viewBox="0 0 18 15"><path d="M1 6l9-4.500 7 2.500v6l-8 4.500-8-3z" fill="#f0b040" stroke="#a86a10"/><path d="M1 6l8 3 8-5M9 9v5.500" fill="none" stroke="#a86a10"/><rect x="6" y="3" width="5" height="2.500" fill="#888"/></svg>
<svg class="abs" style="left:1632px;top:8px" width="16" height="16" viewBox="0 0 16 16"><circle cx="8" cy="8" r="7" fill="#1c3fc8" stroke="#dde" stroke-width="1.400"/><text x="8" y="12" font-size="11" font-weight="bold" fill="#fff" text-anchor="middle" font-family="Liberation Sans,sans-serif">?</text></svg>
<div class="abs" style="left:1656px;top:4px;font-size:8px;line-height:12px;color:#f0f0f8;white-space:nowrap;letter-spacing:.5px">CAPS<br>KANA</div>
<div class="abs" style="left:1682px;top:19px;border:3.500px solid transparent;border-top:4px solid #fff;border-bottom:none"></div>
<svg class="abs" style="left:1722px;top:21px" width="16" height="6" viewBox="0 0 16 6"><path d="M0 6l4-7h8l4 7z" fill="#f4c020"/><rect x="7" y="0" width="2" height="3" fill="#222"/></svg>
<div class="abs" style="left:1746px;top:22px;width:9px;height:4px;border:1.500px solid #dde;border-top:none"></div>
<div class="abs" style="left:1769px;top:22px;width:15px;height:3px;background:repeating-linear-gradient(90deg,#fff 0 3px,transparent 3px 4px)"></div>
<div class="abs" style="left:1796px;top:21px;border:4px solid transparent;border-left:5px solid #eee;border-bottom:none"></div>
<div class="abs" style="left:1828px;top:20px;font-size:12.5px;line-height:16px;color:#fff;white-space:nowrap">2012/12/07</div>
<div class="abs" style="left:1906px;top:0;width:15px;height:40px;border-left:1px solid #6a70b0;background:linear-gradient(rgba(255,255,255,.18),rgba(255,255,255,.05))"></div>
</div>

<!-- BALLOON -->
<div id="balloon"><svg class="abs" style="left:199.700px;top:50px" width="18" height="22" viewBox="0 0 18 22"><path d="M0 0H16.500L14 21z" fill="#fbfbec"/></svg><div class="abs" style="left:0;top:17px;height:22px;line-height:22px;font-size:15.500px"><span class="fit" style="--w:180.4px;letter-spacing:0.47px;position:absolute;left:23px;white-space:nowrap">割り込みが発生しました.</span></div></div>

</div>
</body>
</html>
